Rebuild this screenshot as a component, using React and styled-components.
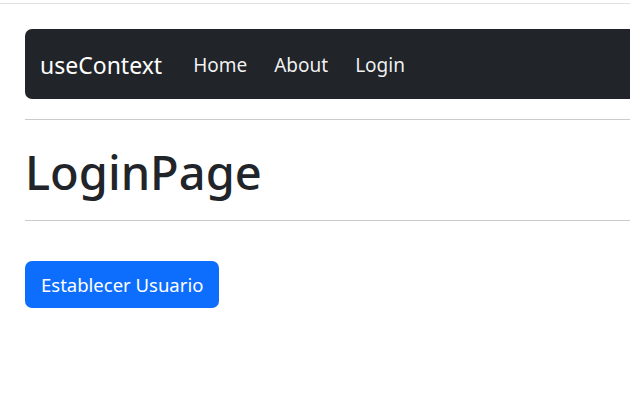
import React from 'react'
import styled, { createGlobalStyle } from 'styled-components'

const GlobalStyle = createGlobalStyle`
  body {
    margin: 0;
    background: #fff;
    font-family: 'Noto Sans', 'Open Sans', sans-serif;
    color: #212529;
    overflow: hidden;
  }
`

const Page = styled.div`
  width: 100vw;
  overflow: hidden;
  padding-top: 3px;
`

const TopRule = styled.div`
  border-top: 1px solid #e2e2e2;
`

const Container = styled.div`
  width: 760px;
  padding: 25px 0 0 25px;
`

const Navbar = styled.nav`
  height: 70px;
  box-sizing: border-box;
  display: flex;
  align-items: center;
  padding: 2px 15px 0;
  background: #212529;
  border-radius: 7px;
`

const Brand = styled.a`
  font-size: 23px;
  color: #fff;
  margin-right: 31px;
`

const NavList = styled.div`
  display: flex;
  gap: 27px;
`

const NavLink = styled.a`
  font-size: 19px;
  color: rgba(255, 255, 255, 0.95);
`

const Rule = styled.hr`
  margin: ${p => p.$top}px 0 0;
  border: 0;
  border-top: 1px solid #cbcbcb;
`

const Title = styled.h1`
  margin: 0;
  height: 100px;
  display: flex;
  align-items: center;
  font-size: 47px;
  font-weight: 500;
  line-height: 1;
  padding-top: 4px;
  box-sizing: border-box;
`

const PrimaryButton = styled.button`
  margin-top: 40px;
  height: 47px;
  padding: 0 16px;
  font-family: inherit;
  font-size: 18.5px;
  color: #fff;
  background: #0d6efd;
  border: 0;
  border-radius: 7px;
`

export default function App() {
  return (
    <Page>
      <GlobalStyle />
      <TopRule />
      <Container>
        <Navbar>
          <Brand>useContext</Brand>
          <NavList>
            <NavLink>Home</NavLink>
            <NavLink>About</NavLink>
            <NavLink>Login</NavLink>
          </NavList>
        </Navbar>
        <Rule $top={20} />
        <Title>LoginPage</Title>
        <Rule $top={0} />
        <PrimaryButton>Establecer Usuario</PrimaryButton>
      </Container>
    </Page>
  )
}
